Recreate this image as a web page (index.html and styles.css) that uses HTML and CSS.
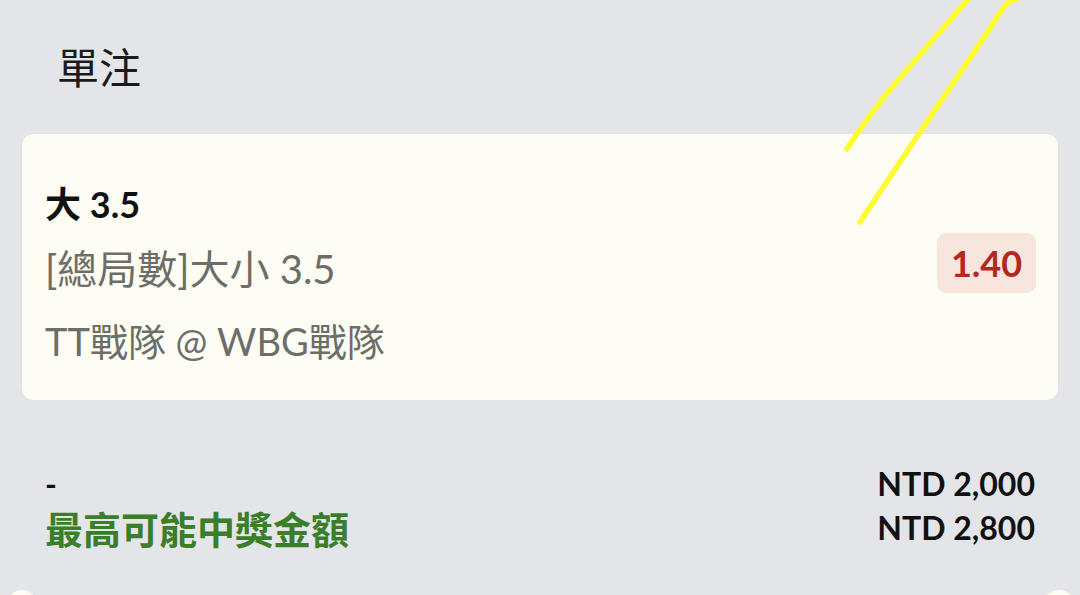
FILE: index.html
```html
<!DOCTYPE html>
<html lang="zh-Hant">
<head>
  <meta charset="UTF-8">
  <title>單注</title>
  <link rel="stylesheet" href="styles.css">
</head>
<body>

  <h2 class="slip-title">單注</h2>

  <div class="bet-card">
    <div class="bet-info">
      <div class="bet-pick">大 3.5</div>
      <div class="bet-market">[總局數]大小 3.5</div>
      <div class="bet-match">TT戰隊 @ WBG戰隊</div>
    </div>
    <div class="odds">1.40</div>
  </div>

  <div class="summary">
    <div class="summary-row">
      <span class="summary-label">-</span>
      <span class="summary-value">NTD 2,000</span>
    </div>
    <div class="summary-row">
      <span class="summary-label payout">最高可能中獎金額</span>
      <span class="summary-value">NTD 2,800</span>
    </div>
  </div>

  <div class="next-peek">
    <span class="knob left"></span>
    <span class="knob right"></span>
  </div>

  <!-- highlighter marks drawn over the screen -->
  <svg class="marks" width="1080" height="595" viewBox="0 0 1080 595">
    <path d="M847 149 C 860 128, 875 108, 893 86 C 915 60, 942 30, 969 -2" />
    <path d="M860 222 C 878 195, 898 165, 920 132 C 945 95, 975 52, 1003 8 C 1008 1, 1014 -1, 1022 -3" />
  </svg>

</body>
</html>
```

FILE: styles.css
```css
body {
  margin: 0;
  background-color: #e4e5e8;
  font-family: Lato, "Noto Sans CJK TC", sans-serif;
  color: #111;
  position: relative;
  height: 595px;
  overflow: hidden;
}

.slip-title {
  margin: 0;
  padding: 38px 57px 0;
  height: 96px;
  font-size: 42px;
  font-weight: 400;
  line-height: 60px;
  color: #1a1a1a;
}

.bet-card {
  margin: 0 22px;
  height: 266px;
  box-sizing: border-box;
  padding: 46px 22px 0 23px;
  background-color: #fefdf4;
  border-radius: 12px;
  display: flex;
  justify-content: space-between;
  align-items: flex-start;
}

.bet-info {
  display: flex;
  flex-direction: column;
}

.bet-pick {
  font-size: 36px;
  font-weight: 700;
  line-height: 48px;
  color: #111;
}

.bet-market,
.bet-match {
  line-height: 48px;
  color: #6d6d69;
}

.bet-market {
  margin-top: 17px;
  font-size: 40px;
}

.bet-match {
  margin-top: 24px;
  font-size: 38px;
}

.odds {
  margin-top: 53px;
  width: 99px;
  height: 60px;
  border-radius: 9px;
  background-color: #f8e5de;
  color: #b3281e;
  font-size: 36px;
  font-weight: 700;
  line-height: 60px;
  text-align: center;
}

.summary {
  margin-top: 61px;
  padding: 0 45px;
}

.summary-row {
  display: flex;
  justify-content: space-between;
  align-items: center;
  height: 44px;
}

.summary-label {
  font-size: 32px;
  font-weight: 700;
}

.summary-label.payout {
  font-size: 38px;
  color: #3b7e2a;
}

.summary-value {
  font-size: 32px;
  font-weight: 700;
  color: #111;
}

.next-peek {
  margin-top: 41px;
  padding: 0 5px 0 8px;
  display: flex;
  justify-content: space-between;
}

.knob {
  width: 28px;
  height: 28px;
  border-radius: 50%;
  background-color: #fefdf4;
}

.knob.right {
  width: 32px;
  height: 32px;
}

.marks {
  position: absolute;
  top: 0;
  left: 0;
  pointer-events: none;
}

.marks path {
  fill: none;
  stroke: #fcfc2e;
  stroke-width: 5.5;
  stroke-linecap: round;
}
```
